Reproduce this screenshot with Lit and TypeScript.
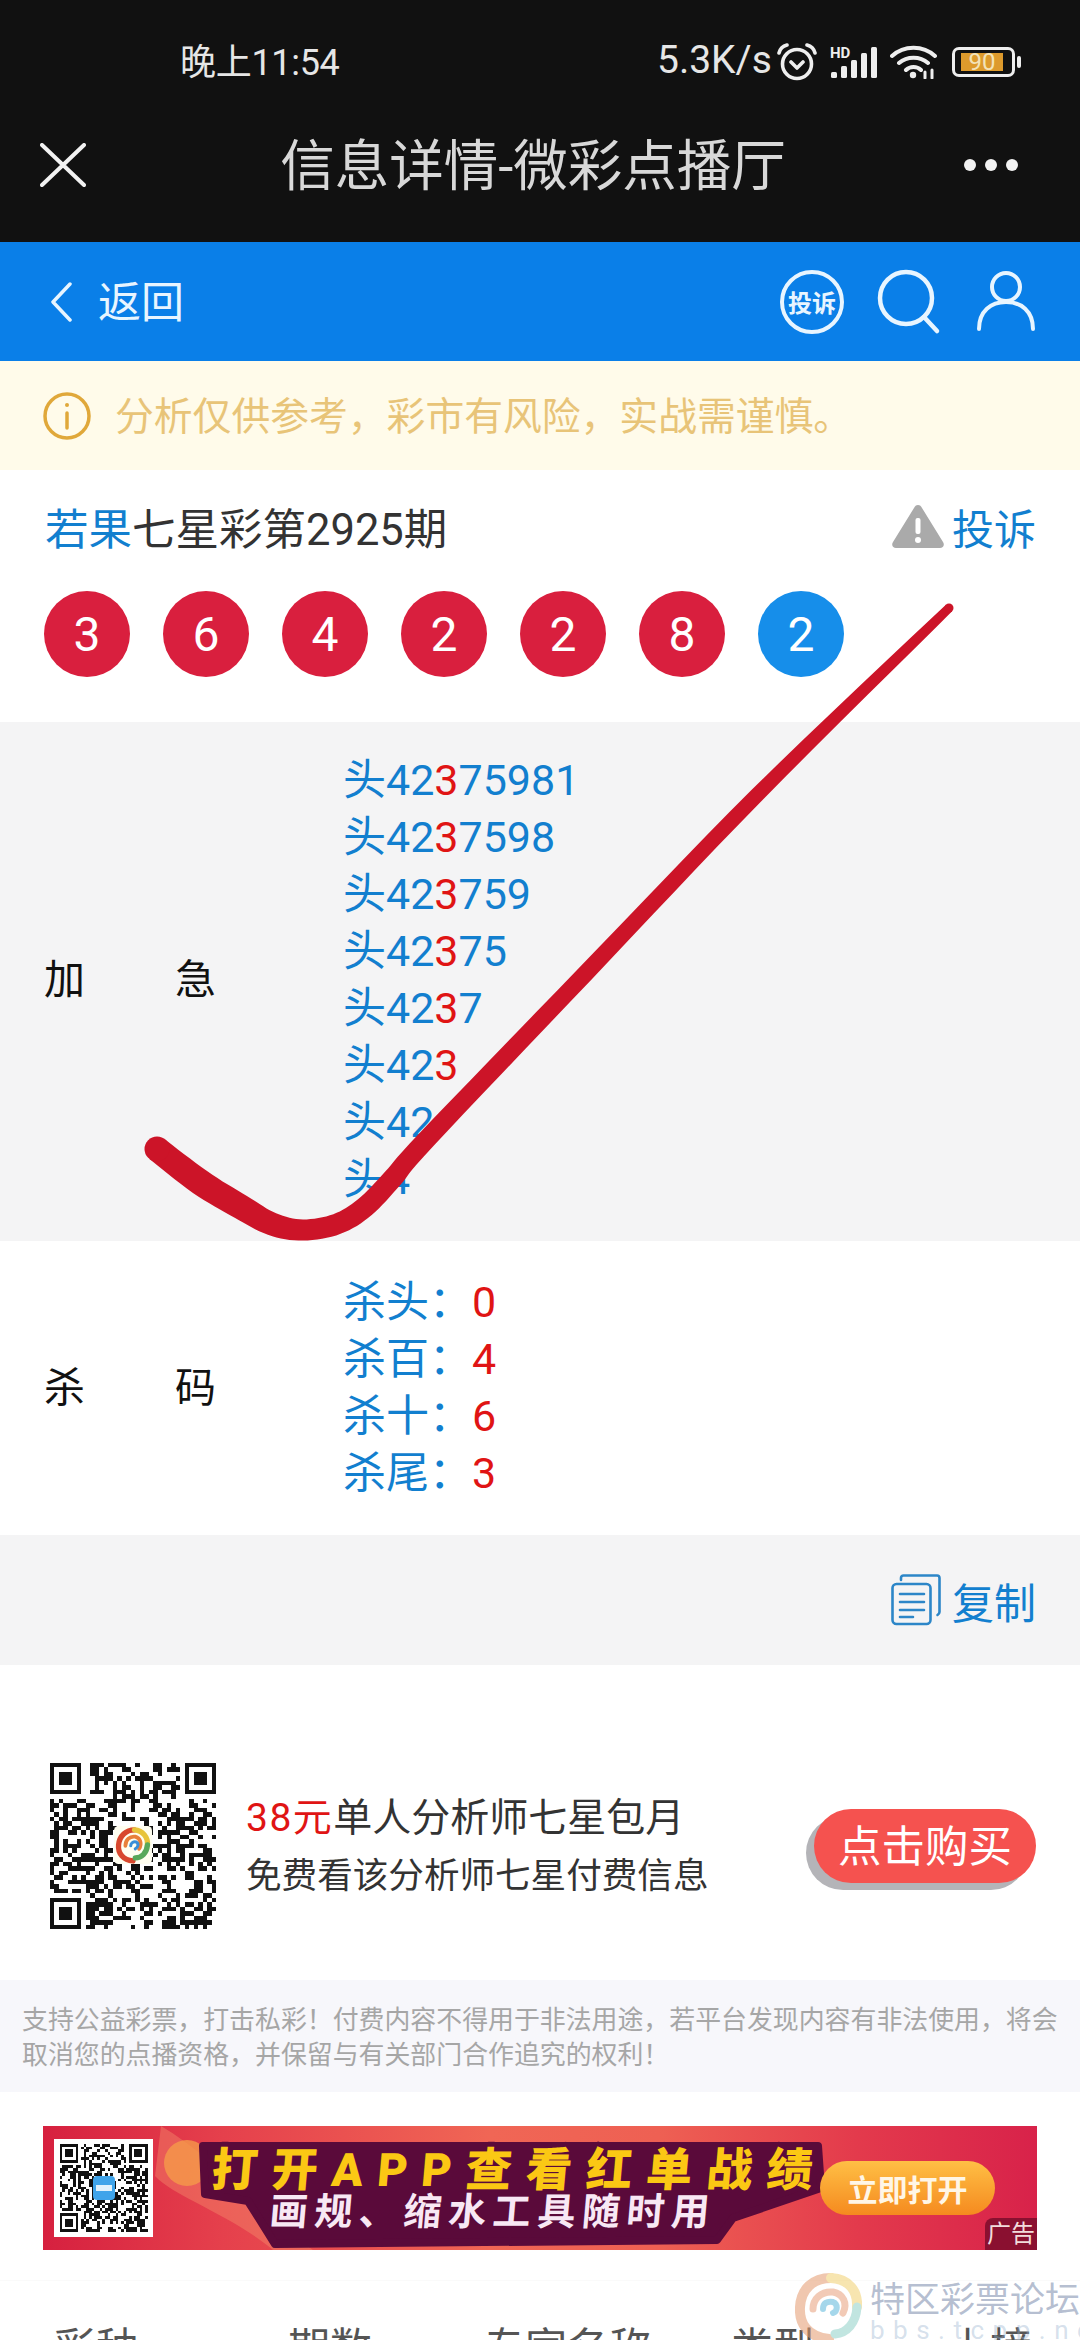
import { LitElement, html, css } from 'lit';
import { customElement } from 'lit/decorators.js';

const BALLS = ['3', '6', '4', '2', '2', '8', '2'];
const RUSH = ['42375981', '4237598', '423759', '42375', '4237', '423', '42', '4'];
const KILLS = [
  ['杀头', '0'],
  ['杀百', '4'],
  ['杀十', '6'],
  ['杀尾', '3'],
];

// red tick somebody drew over the screenshot: x, y, stroke width
const TICK = [
  [157, 1149, 25],
  [200, 1182, 26],
  [241, 1207, 25],
  [272, 1224, 23],
  [303, 1230, 21],
  [337, 1224, 21],
  [365, 1207, 21],
  [393, 1178, 20],
  [427, 1139, 19],
  [585, 974, 17],
  [757, 795, 15],
  [949, 608, 9],
];

function tickPath() {
  const pts: number[][] = [];
  for (let i = 0; i < TICK.length - 1; i++) {
    const a = TICK[Math.max(i - 1, 0)];
    const b = TICK[i];
    const c = TICK[i + 1];
    const d = TICK[Math.min(i + 2, TICK.length - 1)];
    for (let s = 0; s < 8; s++) {
      const t = s / 8;
      const f = (k: number) =>
        0.5 *
        (2 * b[k] +
          (c[k] - a[k]) * t +
          (2 * a[k] - 5 * b[k] + 4 * c[k] - d[k]) * t * t +
          (3 * b[k] - a[k] - 3 * c[k] + d[k]) * t * t * t);
      pts.push([f(0), f(1), b[2] + (c[2] - b[2]) * t]);
    }
  }
  pts.push(TICK[TICK.length - 1]);
  const left: string[] = [];
  const right: string[] = [];
  pts.forEach((p, i) => {
    const q = pts[Math.min(i + 1, pts.length - 1)];
    const o = pts[Math.max(i - 1, 0)];
    const dx = q[0] - o[0];
    const dy = q[1] - o[1];
    const len = Math.hypot(dx, dy) || 1;
    const nx = (-dy / len) * (p[2] / 2);
    const ny = (dx / len) * (p[2] / 2);
    left.push(`${(p[0] + nx).toFixed(1)} ${(p[1] + ny).toFixed(1)}`);
    right.unshift(`${(p[0] - nx).toFixed(1)} ${(p[1] - ny).toFixed(1)}`);
  });
  return `M${left.join('L')}L${right.join('L')}Z`;
}

// not the real code, just modules that look like one
function qrPath(n: number, seed: number, hole: number) {
  let x = seed;
  const rnd = () => {
    x = (x * 1664525 + 1013904223) % 4294967296;
    return x / 4294967296;
  };
  const inFinder = (r: number, c: number, fr: number, fc: number) =>
    r >= fr && r < fr + 8 && c >= fc && c < fc + 8;
  const finderOn = (r: number, c: number) =>
    r === 0 || r === 6 || c === 0 || c === 6 || (r >= 2 && r <= 4 && c >= 2 && c <= 4);
  let d = '';
  const mid = (n - 1) / 2;
  for (let r = 0; r < n; r++) {
    for (let c = 0; c < n; c++) {
      const v = rnd() > 0.5;
      let on = v;
      if (inFinder(r, c, 0, 0)) on = r < 7 && c < 7 && finderOn(r, c);
      else if (inFinder(r, c, 0, n - 8)) on = r < 7 && c > n - 8 && finderOn(r, c - (n - 7));
      else if (inFinder(r, c, n - 8, 0)) on = r > n - 8 && c < 7 && finderOn(r - (n - 7), c);
      else if (Math.abs(r - mid) <= hole && Math.abs(c - mid) <= hole) on = false;
      if (on) d += `M${c} ${r}h1v1h-1z`;
    }
  }
  return d;
}

@customElement('app-root')
export class AppRoot extends LitElement {
  static styles = css`
    :host {
      display: block;
      position: relative;
      width: 1080px;
      height: 2340px;
      overflow: hidden;
      background: #fff;
      font-family: Roboto, 'Noto Sans CJK SC', sans-serif;
      color: #333;
    }
    * {
      box-sizing: border-box;
    }
    svg {
      display: block;
      flex: none;
    }

    .top {
      height: 242px;
      background: #111;
      color: #e6e6e6;
    }
    .status {
      height: 124px;
      display: flex;
      align-items: center;
      padding: 0 59px 0 180px;
      font-size: 36px;
    }
    .time {
      margin-top: -6px;
      letter-spacing: -0.3px;
    }
    .status-right {
      margin-left: auto;
      display: flex;
      align-items: center;
    }
    .speed {
      width: 120px;
      font-size: 39px;
      margin-top: -4px;
    }
    .alarm {
      margin-right: 13px;
    }
    .signal {
      margin-right: 12px;
    }
    .wifi {
      margin-right: 15px;
    }
    .battery {
      width: 63px;
      height: 30px;
      border: 3px solid #eee;
      border-radius: 7px;
      padding: 3px 9px 3px 6px;
      display: flex;
    }
    .battery span {
      flex: 1;
      background: #dd9a2c;
      color: #f3e3b8;
      font-size: 24px;
      line-height: 18px;
      text-align: center;
    }
    .tip {
      width: 4px;
      height: 12px;
      margin-left: 2px;
      background: #eee;
      border-radius: 2px;
    }
    .title {
      height: 82px;
      display: flex;
      align-items: center;
      padding: 0 62px 0 40px;
      justify-content: space-between;
    }
    .title h1 {
      margin: -8px 0 0 16px;
      font-size: 54.5px;
      font-weight: 400;
      color: #d8d8d8;
    }

    .blue {
      height: 119px;
      background: #0a7fe8;
      color: #e8f5ff;
      display: flex;
      align-items: center;
      padding: 0 45px 0 50px;
    }
    .blue .back {
      margin: -6px 0 0 26px;
      font-size: 43px;
    }
    .blue .actions {
      margin-left: auto;
      display: flex;
      align-items: center;
      gap: 36px;
    }
    .badge {
      width: 64px;
      height: 64px;
      margin-right: -3px;
      border: 4px solid #e8f5ff;
      border-radius: 50%;
      display: flex;
      align-items: center;
      justify-content: center;
      font-size: 24px;
      font-weight: 700;
      white-space: nowrap;
    }

    .notice {
      height: 109px;
      background: #fffbea;
      display: flex;
      align-items: center;
      padding-left: 43px;
      gap: 24px;
      color: #e8c478;
      font-size: 38.8px;
    }
    .notice span {
      margin-top: -6px;
    }

    .head {
      height: 252px;
      padding: 30px 44px 0 45px;
    }
    .head-row {
      display: flex;
      align-items: center;
      height: 52px;
      font-size: 43.5px;
      color: #333;
    }
    .blue-text {
      color: #127fcf;
    }
    .report {
      margin-left: auto;
      display: flex;
      align-items: center;
      gap: 7px;
      color: #127fcf;
      font-size: 42px;
    }
    .balls {
      display: flex;
      gap: 33px;
      margin-top: 39px;
      margin-left: -1px;
    }
    .ball {
      width: 86px;
      height: 86px;
      border-radius: 50%;
      background: #d91f3e;
      color: #fff;
      font-size: 48px;
      display: flex;
      align-items: center;
      justify-content: center;
    }
    .ball.last {
      background: #168eea;
    }

    .row {
      display: flex;
      align-items: center;
      padding-left: 44px;
    }
    .row.gray {
      height: 519px;
      background: #f4f4f5;
      padding-bottom: 3px;
    }
    .row.white {
      height: 294px;
    }
    .label {
      width: 172px;
      margin: -8px 127px 0 0;
      display: flex;
      justify-content: space-between;
      font-size: 41px;
      color: #111;
    }
    .lines {
      font-size: 43px;
      line-height: 57px;
      color: #127fcf;
    }
    .hot {
      color: #e01414;
    }

    .copy {
      height: 130px;
      background: #f4f4f5;
      display: flex;
      align-items: center;
      justify-content: flex-end;
      gap: 11px;
      padding-right: 44px;
      font-size: 42px;
      color: #127fcf;
    }

    .promo {
      height: 315px;
      padding: 98px 44px 0 50px;
      display: flex;
      align-items: flex-start;
    }
    .qr {
      position: relative;
      flex: none;
    }
    .promo-text {
      margin: 26px 0 0 30px;
      font-size: 39px;
      line-height: 58px;
    }
    .promo-text .hot {
      letter-spacing: 1.5px;
    }
    .promo-text .sub {
      font-size: 35.6px;
    }
    .buy {
      margin: 46px 0 0 auto;
      width: 222px;
      height: 74px;
      padding-bottom: 6px;
      border-radius: 37px;
      background: #f5524f;
      box-shadow: -8px 7px 0 #b4b4b8;
      color: #fff;
      font-size: 43.5px;
      display: flex;
      align-items: center;
      justify-content: center;
      flex: none;
    }

    .legal {
      height: 112px;
      background: #f7f7fb;
      padding: 23px 20px 0 22px;
      font-size: 25.9px;
      line-height: 35px;
      color: #a6a6a6;
    }

    .ad-wrap {
      height: 188px;
      padding: 34px 43px 0;
    }
    .ad {
      position: relative;
      height: 124px;
      display: flex;
      align-items: center;
      background: linear-gradient(90deg, #d6203f 0%, #e5404c 18%, #f06655 45%, #ee6053 62%, #e33a4c 82%, #d8224a 100%);
    }
    .ad-art {
      position: absolute;
      left: 0;
      top: 0;
    }
    .ad-qr {
      margin-left: 11px;
      width: 99px;
      height: 98px;
      background: #fff;
      padding: 5px;
      position: relative;
      flex: none;
    }
    .ad-copy {
      position: relative;
      margin-left: 57px;
      width: 610px;
      white-space: nowrap;
      transform: skewX(-5deg);
    }
    .ad-main {
      margin-top: 2px;
      font-size: 46px;
      line-height: 50px;
      font-weight: 900;
      letter-spacing: 14.2px;
      color: #fbc814;
      text-shadow: 5px 0 #5a0a3a, -5px 0 #5a0a3a, 0 5px #5a0a3a, 0 -5px #5a0a3a, 4px 4px #5a0a3a, -4px 4px #5a0a3a,
        4px -4px #5a0a3a, -4px -4px #5a0a3a, 8px 0 #5a0a3a, -8px 0 #5a0a3a;
    }
    .ad-sub {
      margin: -5px 0 0 62px;
      font-size: 38px;
      line-height: 44px;
      font-weight: 700;
      letter-spacing: 6.6px;
      color: #f8e8f4;
    }
    .ad-open {
      position: relative;
      width: 175px;
      height: 54px;
      border-radius: 27px;
      background: linear-gradient(180deg, #ffbf45, #f58a1f);
      color: #fff6e6;
      font-size: 30px;
      font-weight: 700;
      display: flex;
      align-items: center;
      justify-content: center;
      flex: none;
    }
    .ad-tag {
      position: absolute;
      right: 0;
      bottom: 0;
      width: 52px;
      height: 32px;
      background: #8a1030;
      border-radius: 8px 0 0 0;
      color: #f2dcdc;
      font-size: 24px;
      line-height: 32px;
      text-align: center;
    }

    .cols {
      height: 60px;
      display: grid;
      grid-template-columns: 234px 195px 248px 217px auto;
      padding: 43px 0 0 54px;
      border-top: 1px solid #fafafa;
      font-size: 42px;
      line-height: 50px;
      color: #555;
    }

    .tick {
      position: absolute;
      left: 0;
      top: 0;
    }
    .mark {
      position: absolute;
      left: 795px;
      top: 2273px;
      width: 285px;
      height: 67px;
      display: flex;
      gap: 8px;
      white-space: nowrap;
    }
    .mark-name {
      margin-top: 3px;
      font-size: 35px;
      line-height: 50px;
      color: rgba(118, 136, 170, 0.55);
    }
    .mark-url {
      font-size: 26px;
      line-height: 20px;
      letter-spacing: 8.5px;
      color: rgba(150, 175, 205, 0.4);
      margin-top: -6px;
    }
  `;

  render() {
    return html`
      <div class="top">
        <div class="status">
          <span class="time">晚上11:54</span>
          <div class="status-right">
            <span class="speed">5.3K/s</span>
            <svg class="alarm" width="40" height="38" viewBox="0 0 40 38" fill="none" stroke="#eee" stroke-width="3.6" stroke-linecap="round" stroke-linejoin="round">
              <circle cx="20" cy="21" r="14.5" />
              <path d="M2 10C3 6 6 3 10 2M38 10C37 6 34 3 30 2M14 19l6 6 6-6" />
            </svg>
            <svg class="signal" width="48" height="32" viewBox="0 0 48 32" fill="#eee">
              <text x="0" y="12" font-size="15" font-weight="700" font-family="Roboto, sans-serif">HD</text>
              <rect x="1" y="26" width="6" height="6" rx="1.5" />
              <rect x="11" y="20" width="6" height="12" rx="1.5" />
              <rect x="21" y="14" width="6" height="18" rx="1.5" />
              <rect x="31" y="7" width="6" height="25" rx="1.5" />
              <rect x="41" y="1" width="6" height="31" rx="1.5" />
            </svg>
            <svg class="wifi" width="47" height="34" viewBox="0 0 47 34" fill="none" stroke="#eee" stroke-width="4" stroke-linecap="round">
              <path d="M2 11C14 0 33 0 45 11M9 18C17 11 30 11 38 18M16 25C20 21 27 21 31 25" />
              <circle cx="23" cy="30" r="3.2" fill="#eee" stroke="none" />
              <path d="M35 27v6M42 25v8" stroke-width="3" />
            </svg>
            <div class="battery"><span>90</span></div>
            <div class="tip"></div>
          </div>
        </div>
        <div class="title">
          <svg width="46" height="44" viewBox="0 0 46 44" fill="none" stroke="#f2f2f2" stroke-width="4" stroke-linecap="round">
            <path d="M2 2l42 40M44 2L2 42" />
          </svg>
          <h1>信息详情-微彩点播厅</h1>
          <svg width="54" height="14" viewBox="0 0 54 14" fill="#f2f2f2">
            <circle cx="6" cy="7" r="6" /><circle cx="27" cy="7" r="6" /><circle cx="48" cy="7" r="6" />
          </svg>
        </div>
      </div>

      <div class="blue">
        <svg width="22" height="40" viewBox="0 0 22 40" fill="none" stroke="#e8f5ff" stroke-width="3.5" stroke-linecap="round" stroke-linejoin="round">
          <path d="M20 2L3 20l17 18" />
        </svg>
        <span class="back">返回</span>
        <div class="actions">
          <div class="badge">投诉</div>
          <svg width="64" height="68" viewBox="0 0 64 68" fill="none" stroke="#e8f5ff" stroke-width="4.5" stroke-linecap="round">
            <circle cx="29" cy="30" r="26" />
            <path d="M47 49l13 14" />
          </svg>
          <svg width="58" height="62" viewBox="0 0 58 62" fill="none" stroke="#e8f5ff" stroke-width="4" stroke-linecap="round">
            <circle cx="29" cy="16" r="14" />
            <path d="M2 58C2 40 14 31 29 31s27 9 27 27" />
          </svg>
        </div>
      </div>

      <div class="notice">
        <svg width="48" height="48" viewBox="0 0 48 48" fill="none" stroke="#e0a83a" stroke-width="3.5">
          <circle cx="24" cy="24" r="22" />
          <path d="M24 21v15" stroke-linecap="round" />
          <circle cx="24" cy="13" r="2" fill="#e0a83a" stroke="none" />
        </svg>
        <span>分析仅供参考，彩市有风险，实战需谨慎。</span>
      </div>

      <div class="head">
        <div class="head-row">
          <span class="blue-text">若果</span><span>七星彩第2925期</span>
          <div class="report">
            <svg width="54" height="44" viewBox="0 0 54 44" fill="#aaa">
              <path d="M27 1c2 0 3 1 4 3l21 34c2 3 0 6-3 6H5c-3 0-5-3-3-6L23 4c1-2 2-3 4-3z" />
              <rect x="24.5" y="14" width="5" height="16" rx="2" fill="#fff" />
              <circle cx="27" cy="36" r="3" fill="#fff" />
            </svg>
            <span>投诉</span>
          </div>
        </div>
        <div class="balls">
          ${BALLS.map((b, i) => html`<div class="ball ${i === BALLS.length - 1 ? 'last' : ''}">${b}</div>`)}
        </div>
      </div>

      <div class="row gray">
        <div class="label"><span>加</span><span>急</span></div>
        <div class="lines">
          ${RUSH.map(r => {
            const at = r.indexOf('3');
            return at < 0
              ? html`<div>头${r}</div>`
              : html`<div>头${r.slice(0, at)}<span class="hot">3</span>${r.slice(at + 1)}</div>`;
          })}
        </div>
      </div>

      <div class="row white">
        <div class="label"><span>杀</span><span>码</span></div>
        <div class="lines">
          ${KILLS.map(k => html`<div>${k[0]}：<span class="hot">${k[1]}</span></div>`)}
        </div>
      </div>

      <div class="copy">
        <svg width="50" height="52" viewBox="0 0 50 52" fill="none" stroke="#2c86c8" stroke-width="2.6" stroke-linecap="round" stroke-linejoin="round">
          <path d="M10 6V4c0-1.500 1-2.500 2.500-2.500H46c1.500 0 2.500 1 2.500 2.500v34c0 1.500-.5 2-2 3" />
          <rect x="1.500" y="10" width="38" height="40" rx="4" />
          <path d="M9 20h24M9 28h24M9 36h24M9 43h13" />
        </svg>
        <span>复制</span>
      </div>

      <div class="promo">
        <div class="qr">
          <svg width="166" height="166" viewBox="0 0 37 37" shape-rendering="crispEdges">
            <path d="${qrPath(37, 7, 3)}" fill="#111" />
          </svg>
          ${this.swirl(64, 63, 38)}
        </div>
        <div class="promo-text">
          <div><span class="hot">38元</span>单人分析师七星包月</div>
          <div class="sub">免费看该分析师七星付费信息</div>
        </div>
        <div class="buy">点击购买</div>
      </div>

      <div class="legal">
        支持公益彩票，打击私彩！付费内容不得用于非法用途，若平台发现内容有非法使用，将会取消您的点播资格，并保留与有关部门合作追究的权利！
      </div>

      <div class="ad-wrap">
        <div class="ad">
          <svg class="ad-art" width="994" height="124" viewBox="0 0 994 124">
            <path d="M118 0C170 30 220 90 270 124H230C190 90 130 70 112 50z" fill="#f58a6a" opacity="0.45" />
            <circle cx="144" cy="37" r="23" fill="#f59a4a" opacity="0.8" />
            <path d="M160 20L775 20L778 62L690 92L674 114L232 118L205 75L162 68z" fill="#5a0a3a" stroke="#5a0a3a" stroke-width="8" stroke-linejoin="round" />
          </svg>
          <div class="ad-qr">
            <svg width="89" height="88" viewBox="0 0 33 33" shape-rendering="crispEdges">
              <path d="${qrPath(33, 21, 3)}" fill="#111" />
            </svg>
            <svg style="position:absolute;left:38px;top:36px" width="24" height="26" viewBox="0 0 24 26">
              <rect x="1" y="1" width="22" height="24" rx="4" fill="#3fa4ea" />
              <rect x="4" y="10" width="16" height="6" fill="#dff1fc" />
            </svg>
          </div>
          <div class="ad-copy">
            <div class="ad-main">打开APP查看红单战绩</div>
            <div class="ad-sub">画规、缩水工具随时用</div>
          </div>
          <div class="ad-open">立即打开</div>
          <div class="ad-tag">广告</div>
        </div>
      </div>

      <div class="cols">
        <span>彩种</span><span>期数</span><span>专家名称</span><span>类型</span><span>上榜</span>
      </div>

      <svg class="tick" width="1080" height="2340" viewBox="0 0 1080 2340" fill="#cc1428">
        <path d="${tickPath()}" />
        <circle cx="157" cy="1149" r="12.500" />
        <circle cx="949" cy="608" r="4.500" />
      </svg>

      <div class="mark">
        <svg width="67" height="70" viewBox="0 0 67 70" fill="none" stroke-linecap="round" opacity="0.55">
          <path d="M34 66C12 64 4 50 5 34 6 16 18 5 36 5" stroke="#e59a6e" stroke-width="10" />
          <path d="M36 5C54 6 63 18 62 34" stroke="#f2d070" stroke-width="10" />
          <path d="M62 34C61 50 52 60 40 61" stroke="#8fd0c8" stroke-width="9" />
          <path d="M18 36C18 26 26 18 38 19 48 21 53 30 48 40" stroke="#e8a07c" stroke-width="7" />
          <path d="M28 36C28 30 32 28 38 29 43 31 43 38 38 40" stroke="#5cb8dc" stroke-width="6" />
        </svg>
        <div>
          <div class="mark-name">特区彩票论坛</div>
          <div class="mark-url">bbs.tcpp.net</div>
        </div>
      </div>
    `;
  }

  swirl(x: number, y: number, size: number) {
    return html`
      <svg style="position:absolute;left:${x}px;top:${y}px" width="${size}" height="${size}" viewBox="0 0 50 50" fill="none" stroke-linecap="round">
        <rect width="50" height="50" rx="6" fill="#fffef0" stroke="none" />
        <path d="M25 46C12 45 5 36 6 25 7 13 16 5 27 5" stroke="#d8482e" stroke-width="7" />
        <path d="M27 5C38 6 45 15 44 25" stroke="#e8c43a" stroke-width="7" />
        <path d="M44 25C43 36 36 42 28 42" stroke="#58a85a" stroke-width="7" />
        <path d="M15 26C15 18 21 13 28 14 35 16 37 24 33 30" stroke="#e8803a" stroke-width="5" />
        <path d="M22 26C22 22 26 20 29 21 33 23 32 28 28 30" stroke="#3a8ed8" stroke-width="4" />
      </svg>
    `;
  }
}
